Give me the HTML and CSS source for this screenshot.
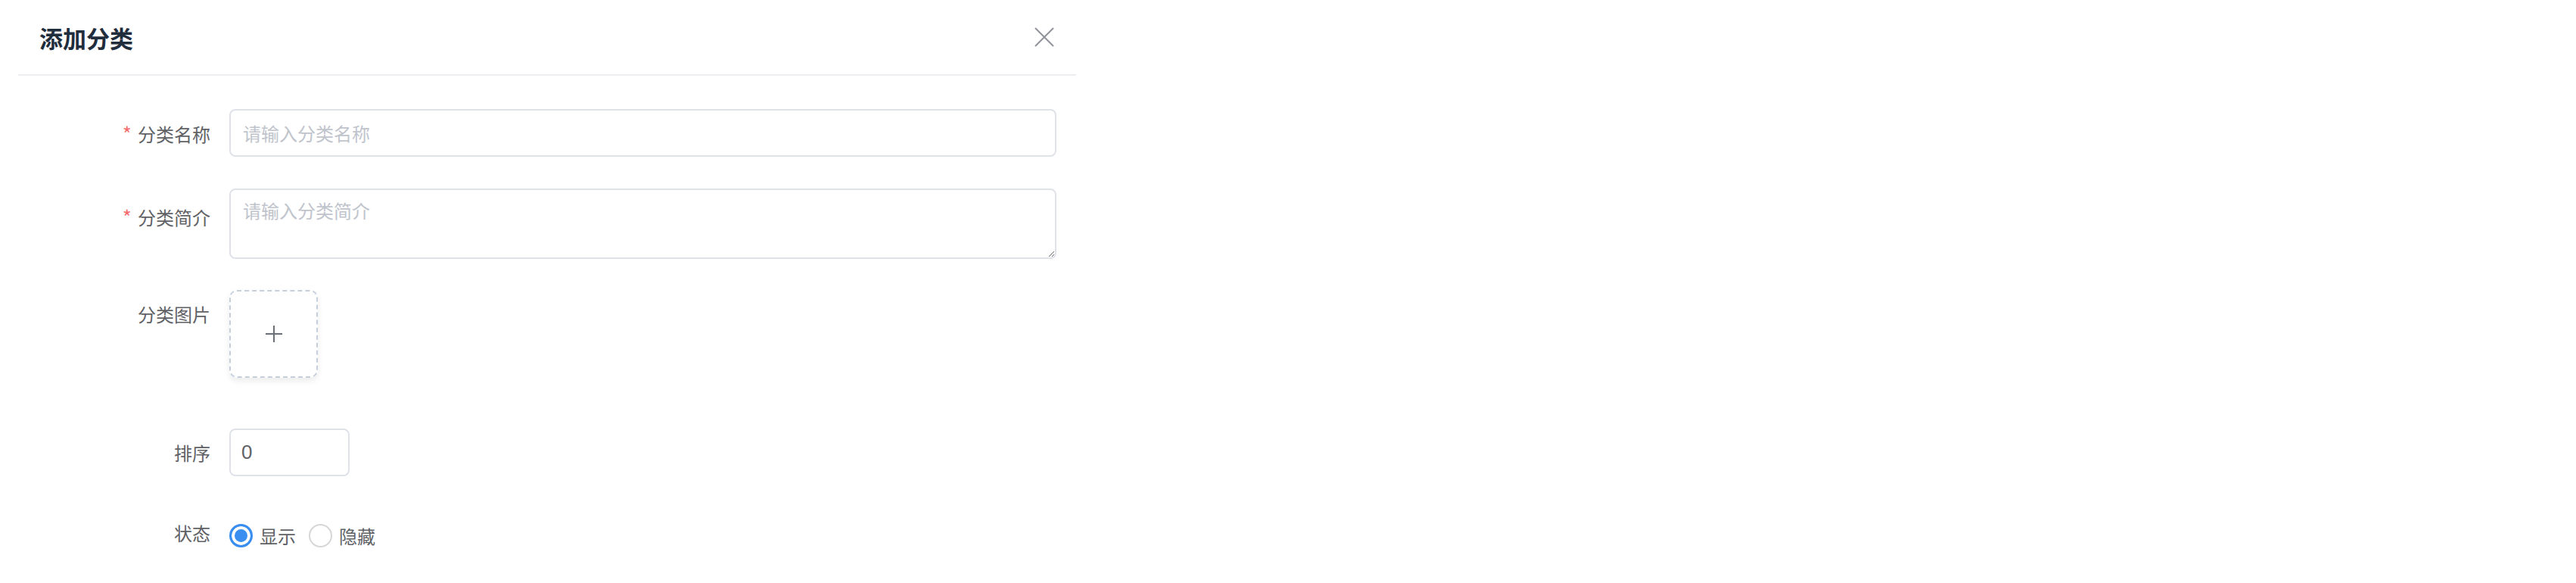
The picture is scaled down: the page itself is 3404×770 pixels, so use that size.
FILE: index.html
```html
<!DOCTYPE html>
<html lang="zh-CN">
<head>
    <meta charset="UTF-8">
    <meta name="viewport" content="width=device-width, initial-scale=1.0">
    <title>添加分类</title>
    <link rel="stylesheet" href="styles.css">
</head>
<body>

    <div class="dialog">
        <div class="dialog-header">
            <span class="dialog-title">添加分类</span>
            <button class="dialog-close" type="button" aria-label="关闭">
                <svg width="26" height="26" viewBox="0 0 26 26">
                    <path d="M1 1 L25 25 M25 1 L1 25" stroke="#909399" stroke-width="2" fill="none"/>
                </svg>
            </button>
        </div>

        <form class="form">
            <div class="form-item">
                <label class="form-label required" for="name">分类名称</label>
                <input class="text-input wide" id="name" type="text" placeholder="请输入分类名称">
            </div>
            <div class="form-item">
                <label class="form-label required tall" for="intro">分类简介</label>
                <textarea class="text-area" id="intro" placeholder="请输入分类简介"></textarea>
            </div>
            <div class="form-item upload-item">
                <label class="form-label">分类图片</label>
                <div class="upload-box">
                    <svg width="22" height="22" viewBox="0 0 22 22">
                        <path d="M11 0 V22 M0 11 H22" stroke="#6b6f78" stroke-width="2" fill="none"/>
                    </svg>
                </div>
            </div>
            <div class="form-item sort-item">
                <label class="form-label" for="sort">排序</label>
                <input class="text-input short" id="sort" type="text" value="0">
            </div>
            <div class="form-item">
                <label class="form-label">状态</label>
                <div class="radio-group">
                    <label class="radio">
                        <input type="radio" name="status" checked>
                        <span>显示</span>
                    </label>
                    <label class="radio">
                        <input type="radio" name="status">
                        <span>隐藏</span>
                    </label>
                </div>
            </div>
        </form>
    </div>

</body>
</html>
```

FILE: styles.css
```css
body {
    font-family: "Noto Sans CJK SC", "Noto Sans", sans-serif;
    margin: 0;
    padding: 0;
    background-color: #ffffff;
    color: #606266;
    overflow: hidden;
}
.dialog {
    margin-left: 24px;
    width: 1398px;
}
.dialog-header {
    display: flex;
    justify-content: space-between;
    align-items: center;
    height: 98px;
    padding: 0 29px 0 28px;
    border-bottom: 2px solid #eceef2;
}
.dialog-title {
    font-size: 31px;
    font-weight: 600;
    color: #1f2d3d;
}
.dialog-close {
    background: none;
    border: none;
    padding: 0;
    width: 26px;
    height: 26px;
    cursor: pointer;
}
.form {
    padding-top: 44px;
}
.form-item {
    display: flex;
    align-items: flex-start;
    margin-bottom: 41px;
}
.form-label {
    width: 279px;
    box-sizing: border-box;
    padding-right: 25px;
    text-align: right;
    font-size: 24px;
    line-height: 63px;
    color: #606266;
}
.form-label.tall {
    padding-top: 5px;
}
.form-label.required::before {
    content: "*";
    color: #f56c6c;
    font-size: 26px;
    margin-right: 8px;
}
.text-input {
    box-sizing: border-box;
    height: 63px;
    border: 2px solid #dfe2e8;
    border-radius: 8px;
    padding: 0 16px;
    font-family: inherit;
    font-size: 24px;
    color: #606266;
    outline: none;
}
.text-input.wide {
    width: 1093px;
}
.text-input.short {
    width: 159px;
    padding: 0 14px;
    font-family: "Liberation Sans", Arial, sans-serif;
    font-size: 26px;
}
.text-input::placeholder,
.text-area::placeholder {
    color: #c0c4cc;
}
.text-area {
    box-sizing: border-box;
    width: 1093px;
    height: 93px;
    border: 2px solid #dfe2e8;
    border-radius: 8px;
    padding: 9px 16px;
    font-family: inherit;
    font-size: 24px;
    line-height: 36px;
    color: #606266;
    resize: vertical;
    outline: none;
}
.upload-item {
    margin-bottom: 67px;
}
.sort-item {
    margin-bottom: 43px;
}
.upload-box {
    box-sizing: border-box;
    width: 117px;
    height: 116px;
    border: 2px dashed #c6d0dc;
    border-radius: 10px;
    box-shadow: 0 4px 8px rgba(0, 0, 0, 0.08);
    display: flex;
    align-items: center;
    justify-content: center;
    cursor: pointer;
}
.radio-group {
    display: flex;
    align-items: center;
    height: 64px;
    padding-top: 6px;
    box-sizing: border-box;
    font-size: 24px;
    color: #606266;
}
.radio {
    display: flex;
    align-items: center;
    margin-right: 17px;
    cursor: pointer;
}
.radio input {
    appearance: none;
    -webkit-appearance: none;
    box-sizing: border-box;
    width: 31px;
    height: 31px;
    margin: 0 9px 0 0;
    border: 2px solid #d6d6d6;
    border-radius: 50%;
    background-color: #ffffff;
}
.radio input:checked {
    border: 3px solid #3a8ef0;
    background-color: #3a8ef0;
    box-shadow: inset 0 0 0 4px #ffffff;
}
```
